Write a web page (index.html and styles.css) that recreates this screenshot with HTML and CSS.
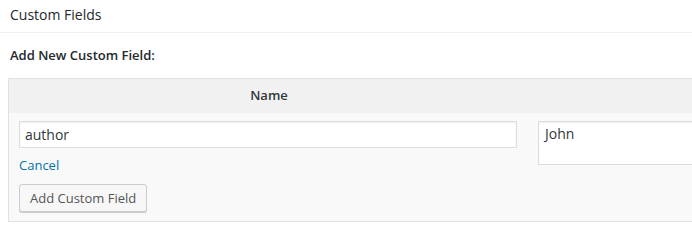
FILE: index.html
```html
<!DOCTYPE html>
<html>
<head>
<meta charset="utf-8">
<link rel="stylesheet" href="styles.css">
</head>
<body>
<div class="postbox">
  <h2 class="hndle">Custom Fields</h2>
  <div class="inside">
    <p class="addnew">Add New Custom Field:</p>
    <div class="newmeta">
      <div class="thead">
        <div class="th-name">Name</div>
        <div class="th-value"></div>
      </div>
      <div class="tbody">
        <div class="col-name">
          <input class="metakey" type="text" value="author">
          <a class="cancel" href="#">Cancel</a>
          <button class="button">Add Custom Field</button>
        </div>
        <div class="col-value">
          <textarea class="metavalue">John</textarea>
        </div>
      </div>
    </div>
  </div>
</div>
</body>
</html>
```

FILE: styles.css
```css
html, body {
  margin: 0;
  padding: 0;
  background: #fff;
  overflow: hidden;
}
body {
  font-family: "Open Sans", "Liberation Sans", sans-serif;
  font-size: 13px;
  color: #444;
}
.postbox {
  width: 692px;
  overflow: hidden;
}
.hndle {
  margin: 0;
  height: 32px;
  line-height: 30px;
  padding: 0 10px;
  font-size: 14px;
  font-weight: 400;
  color: #23282d;
  border-bottom: 1px solid #eee;
}
.inside {
  padding: 0 0 0 8px;
}
.addnew {
  margin: 0;
  padding: 12px 0 0 2px;
  line-height: 20px;
  font-weight: 600;
  color: #23282d;
  box-sizing: border-box;
  height: 45px;
}
.newmeta {
  width: 900px;
  border: 1px solid #e1e1e1;
  background: #f9f9f9;
}
.thead {
  display: flex;
  background: #f1f1f1;
  height: 33px;
  border-bottom: 1px solid #f1f1f1;
}
.th-name {
  width: 520px;
  text-align: center;
  line-height: 33px;
  font-weight: 600;
  color: #32373c;
}
.tbody {
  display: flex;
  padding: 8px 0 9px;
}
.col-name {
  width: 520px;
  padding: 0 10px;
  box-sizing: border-box;
  display: flex;
  flex-direction: column;
  align-items: flex-start;
}
.col-value {
  padding-left: 11px;
}
.metakey {
  width: 498px;
  height: 27px;
  box-sizing: border-box;
  border: 1px solid #ddd;
  box-shadow: inset 0 1px 2px rgba(0,0,0,0.07);
  background: #fff;
  font-family: "Open Sans", "Liberation Sans", sans-serif;
  font-size: 14px;
  color: #32373c;
  padding: 0 5px;
  margin: 0;
  outline: none;
}
.cancel {
  color: #0073aa;
  text-decoration: none;
  line-height: 18px;
  margin-top: 8px;
}
.button {
  margin-top: 10px;
  height: 28px;
  padding: 0 10px 1px;
  border: 1px solid #ccc;
  border-radius: 3px;
  background: #f7f7f7;
  box-shadow: 0 1px 0 #ccc;
  font-family: "Open Sans", "Liberation Sans", sans-serif;
  font-size: 13px;
  color: #555;
  line-height: 26px;
  white-space: nowrap;
}
.metavalue {
  display: block;
  width: 400px;
  height: 44px;
  box-sizing: border-box;
  border: 1px solid #ddd;
  box-shadow: inset 0 1px 2px rgba(0,0,0,0.07);
  background: #fff;
  font-family: "Open Sans", "Liberation Sans", sans-serif;
  font-size: 14px;
  color: #32373c;
  padding: 2px 6px;
  margin: 0;
  resize: none;
  line-height: 20px;
  outline: none;
}
```
